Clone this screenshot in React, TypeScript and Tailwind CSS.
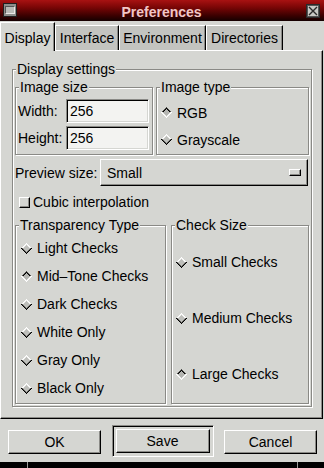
import React from "react";

function Diamond({ on }: { on?: boolean }) {
  const topOuter = on ? "#4e4e4a" : "#ffffff";
  const topInner = on ? "#000000" : "#f0f0ee";
  const botOuter = on ? "#ffffff" : "#000000";
  const botInner = on ? "#f0f0ee" : "#5e5e5a";
  const fill = on ? "#b4b5b1" : "#bebfbb";
  return (
    <svg width="11" height="11" viewBox="0 0 11 11" className="shrink-0" shapeRendering="crispEdges">
      <polygon points="5.5,0.5 10.5,5.5 5.5,10.5 0.5,5.5" fill={fill} />
      <polyline points="0.5,5.5 5.5,0.5 10.5,5.5" fill="none" stroke={topOuter} strokeWidth="1" />
      <polyline points="1.5,5.5 5.5,1.5 9.5,5.5" fill="none" stroke={topInner} strokeWidth="1" />
      <polyline points="0.5,5.5 5.5,10.5 10.5,5.5" fill="none" stroke={botOuter} strokeWidth="1" />
      <polyline points="1.5,5.5 5.5,9.5 9.5,5.5" fill="none" stroke={botInner} strokeWidth="1" />
    </svg>
  );
}

function Radio({ label, on, className }: { label: string; on?: boolean; className: string }) {
  return (
    <div className={className}>
      <Diamond on={on} />
      <span>{label}</span>
    </div>
  );
}

function Frame({
  label,
  className,
  children,
}: {
  label: string;
  className: string;
  children?: React.ReactNode;
}) {
  return (
    <div
      className={
        "relative border border-[#8a8a86] shadow-[inset_1px_1px_0_#ffffff,1px_1px_0_#ffffff] " + className
      }
    >
      <span className="absolute left-[3px] top-[-9px] whitespace-nowrap bg-[#d5d6d2] px-[1px] leading-[16px]">
        {label}
      </span>
      {children}
    </div>
  );
}

function Entry({ value }: { value: string }) {
  return (
    <div className="flex h-[24px] w-[83px] items-center border border-b-white border-l-[#8a8a86] border-r-white border-t-[#8a8a86] bg-[#f3f3f1] pl-[3px] shadow-[inset_1px_1px_0_#000000,inset_-1px_-1px_0_#d5d6d2]">
      {value}
    </div>
  );
}

function Button({ label, className }: { label: string; className: string }) {
  return (
    <div
      className={
        "flex items-center justify-center border border-b-black border-l-white border-r-black border-t-white shadow-[inset_-1px_-1px_0_#8a8a86] " +
        className
      }
    >
      {label}
    </div>
  );
}

function Tab({ label, active, className }: { label: string; active?: boolean; className: string }) {
  if (active) {
    return (
      <div
        className={
          "relative z-10 -mb-[1px] flex h-[29px] items-center justify-center border-l border-r border-t border-l-white border-r-black border-t-white bg-[#d5d6d2] pt-[1px] shadow-[inset_-1px_0_0_#8a8a86] " +
          className
        }
      >
        {label}
      </div>
    );
  }
  return (
    <div
      className={
        "flex h-[25px] items-center justify-center border-l border-r border-t border-l-white border-r-black border-t-white bg-[#c3c4c0] shadow-[inset_-1px_0_0_#8a8a86] " +
        className
      }
    >
      {label}
    </div>
  );
}

export default function App() {
  return (
    <div className="flex h-[468px] w-[324px] flex-col overflow-hidden bg-[#d5d6d2] font-['Liberation_Sans',Arial,sans-serif] text-[14px] leading-[16px] text-black">
      {/* Title bar */}
      <div className="flex h-[21px] shrink-0 items-start bg-[linear-gradient(to_bottom,#a81212_0%,#7a0606_35%,#3a0000_75%,#140000_100%)] pl-[3px] pr-[4px]">
        <div className="mt-[3px] flex h-[14px] w-[14px] items-center justify-center border border-[#1e1e1e] bg-[#8d8d8a]">
          <div className="h-[8px] w-[10px] border border-b-[#e8e8e6] border-l-[#555] border-r-[#e8e8e6] border-t-[#555] bg-[#b9bab6]" />
        </div>
        <div className="flex-1 pt-[4px] text-center text-[14px] font-bold leading-[16px] text-[#f1c6c6]">
          Preferences
        </div>
        <div className="mt-[4px] flex h-[14px] w-[14px] items-center justify-center border border-[#2a2a2a] bg-[#c9cac6]">
          <svg width="12" height="12" viewBox="0 0 12 12">
            <rect x="0.5" y="0.5" width="11" height="11" fill="none" stroke="#555" />
            <path d="M2 2 L10 10 M10 2 L2 10" stroke="#2a2a2a" strokeWidth="1.4" />
          </svg>
        </div>
      </div>

      {/* Tabs */}
      <div className="flex h-[29px] shrink-0 items-end">
        <Tab label="Display" active className="w-[55px]" />
        <Tab label="Interface" className="w-[64px]" />
        <Tab label="Environment" className="w-[87px]" />
        <Tab label="Directories" className="w-[77px]" />
      </div>

      {/* Page */}
      <div className="h-[369px] w-[323px] shrink-0 border-b border-l border-r border-t border-b-black border-l-white border-r-black border-t-white shadow-[inset_-1px_-1px_0_#8a8a86]">
        <Frame
          label="Display settings"
          className="ml-[11px] mt-[18px] flex h-[338px] w-[300px] flex-col px-[2px] pb-[2px] pt-[17px]"
        >
          <div className="flex h-[68px] shrink-0 gap-[3px]">
            <Frame label="Image size" className="flex w-[138px] flex-col gap-[3px] pl-[2px] pt-[11px]">
              <div className="flex items-center">
                <span className="w-[48px]">Width:</span>
                <Entry value="256" />
              </div>
              <div className="flex items-center">
                <span className="w-[48px]">Height:</span>
                <Entry value="256" />
              </div>
            </Frame>
            <Frame label="Image type" className="flex flex-1 flex-col pl-[4px] pt-[11px]">
              <Radio label="RGB" on className="flex h-[27px] items-center gap-[5px]" />
              <Radio label="Grayscale" className="flex h-[27px] items-center gap-[5px]" />
            </Frame>
          </div>

          <div className="mt-[4px] flex h-[27px] shrink-0 items-center justify-between pr-[1px]">
            <span>Preview size:</span>
            <div className="flex h-[27px] w-[208px] items-center justify-between border border-b-black border-l-white border-r-black border-t-white pl-[6px] pr-[6px] shadow-[inset_-1px_-1px_0_#8a8a86]">
              <span>Small</span>
              <div className="h-[7px] w-[12px] border border-b-black border-l-white border-r-black border-t-white shadow-[inset_-1px_-1px_0_#8a8a86]" />
            </div>
          </div>

          <div className="mt-[4px] flex h-[24px] shrink-0 items-center gap-[3px] pl-[4px]">
            <div className="h-[11px] w-[11px] border border-b-black border-l-white border-r-black border-t-white shadow-[inset_-1px_-1px_0_#8a8a86]" />
            <span>Cubic interpolation</span>
          </div>

          <div className="mt-[11px] flex h-[179px] shrink-0 gap-[5px]">
            <Frame label="Transparency Type" className="flex w-[151px] flex-col pl-[5px] pt-[8px]">
              <Radio label="Light Checks" className="flex h-[28px] items-center gap-[5px]" />
              <Radio label="Mid–Tone Checks" on className="flex h-[28px] items-center gap-[5px]" />
              <Radio label="Dark Checks" className="flex h-[28px] items-center gap-[5px]" />
              <Radio label="White Only" className="flex h-[28px] items-center gap-[5px]" />
              <Radio label="Gray Only" className="flex h-[28px] items-center gap-[5px]" />
              <Radio label="Black Only" className="flex h-[28px] items-center gap-[5px]" />
            </Frame>
            <Frame label="Check Size" className="flex flex-1 flex-col pl-[4px] pt-[8px]">
              <Radio label="Small Checks" className="flex h-[56px] items-center gap-[5px]" />
              <Radio label="Medium Checks" className="flex h-[56px] items-center gap-[5px]" />
              <Radio label="Large Checks" on className="flex h-[56px] items-center gap-[5px]" />
            </Frame>
          </div>
        </Frame>
      </div>

      {/* Buttons */}
      <div className="flex h-[43px] shrink-0 items-start justify-between pl-[8px] pr-[7px] pt-[6px]">
        <Button label="OK" className="mt-[5px] h-[24px] w-[93px]" />
        <div className="h-[32px] w-[102px] border border-b-white border-l-[#8a8a86] border-r-white border-t-[#8a8a86] p-[3px] shadow-[inset_1px_1px_0_#000000]">
          <Button label="Save" className="h-[24px] w-full" />
        </div>
        <Button label="Cancel" className="mt-[5px] h-[24px] w-[93px]" />
      </div>

      {/* Bottom bar */}
      <div className="flex h-[6px] shrink-0 bg-black">
        <div className="w-[27px]" />
        <div className="w-[1px] bg-[#9a9a98]" />
        <div className="flex-1" />
        <div className="w-[1px] bg-[#9a9a98]" />
        <div className="w-[26px]" />
      </div>
    </div>
  );
}
